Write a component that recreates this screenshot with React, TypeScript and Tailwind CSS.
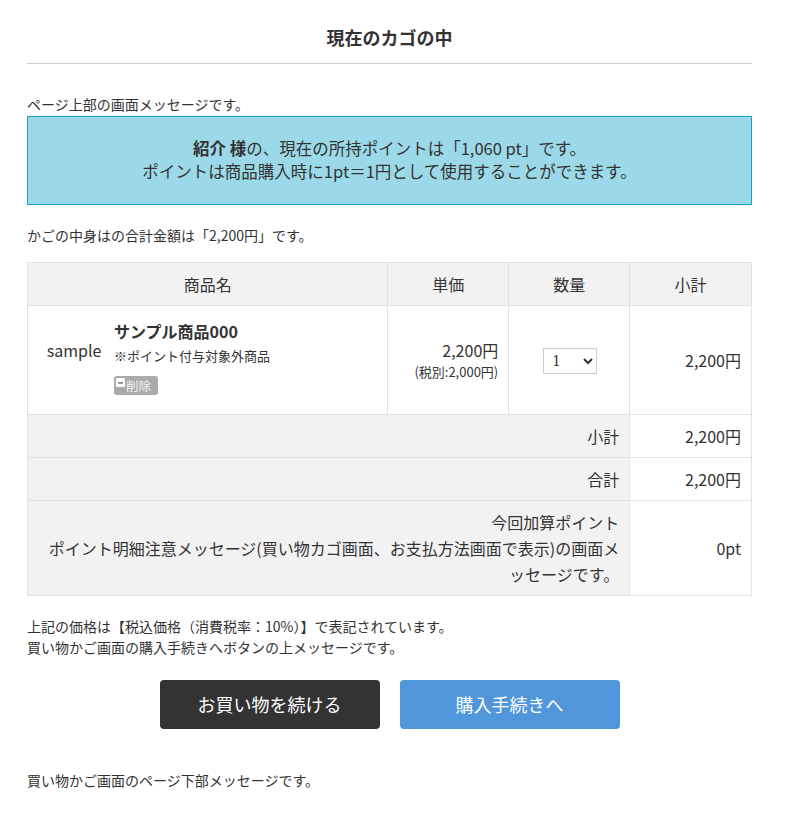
import React from "react";

const font = { fontFamily: '"Noto Sans CJK JP", "Noto Sans", sans-serif' };

export default function App() {
  const cell = "border border-[#e3e3e3] px-[10px] py-[8px]";
  return (
    <div className="w-[787px] bg-white text-[#333]" style={font}>
      <div className="ml-[27px] w-[725px] pb-[35px]">
        <div className="border-b border-[#cccccc] pt-[24px] pb-[12px] text-center text-[18px] font-bold leading-[27px]">
          現在のカゴの中
        </div>

        <p className="mt-[30px] text-[14px] leading-[21px]">ページ上部の画面メッセージです。</p>

        <div className="mt-[1px] border border-[#1aa3c9] bg-[#9bd9e8] pt-[20px] pb-[21px] text-center text-[16.5px] leading-[23px]">
          <div>
            <span className="font-bold">紹介 様</span>の、現在の所持ポイントは「1,060 pt」です。
          </div>
          <div>ポイントは商品購入時に1pt＝1円として使用することができます。</div>
        </div>

        <p className="mt-[20px] text-[14px] leading-[21px]">かごの中身はの合計金額は「2,200円」です。</p>

        <table className="mt-[16px] w-full border-collapse text-[16px] leading-[26px]">
          <colgroup>
            <col className="w-[361px]" />
            <col className="w-[121px]" />
            <col className="w-[121px]" />
            <col className="w-[122px]" />
          </colgroup>
          <thead>
            <tr className="bg-[#f2f2f2]">
              <th className={`${cell} font-normal`}>商品名</th>
              <th className={`${cell} font-normal`}>単価</th>
              <th className={`${cell} font-normal`}>数量</th>
              <th className={`${cell} font-normal`}>小計</th>
            </tr>
          </thead>
          <tbody>
            <tr className="h-[109px]">
              <td className={`${cell} align-middle`}>
                <div className="flex items-center gap-[4px]">
                  <div className="mb-[20px] w-[72px] text-center">sample</div>
                  <div className="mb-[6px] flex flex-col items-start">
                    <div className="font-bold leading-[24px]">サンプル商品000</div>
                    <div className="mt-[3px] text-[13px] leading-[20px]">※ポイント付与対象外商品</div>
                    <div className="mt-[10px] flex h-[19px] w-[44px] items-start gap-[1px] rounded-[3px] bg-[#aaaaaa] pl-[2px] pt-[1px] text-[12.5px] leading-[19px] text-[#f4f4f4]">
                      <span className="mt-[1px] flex h-[9px] w-[9px] shrink-0 items-center justify-center rounded-[1px] bg-white">
                        <span className="h-[2px] w-[5px] bg-[#999999]" />
                      </span>
                      <span className="-mt-[1px]">削除</span>
                    </div>
                  </div>
                </div>
              </td>
              <td className={`${cell} text-right align-middle`}>
                <div className="leading-[24px]">2,200円</div>
                <div className="text-[13px] leading-[20px]">(税別:2,000円)</div>
              </td>
              <td className={`${cell} text-center align-middle`}>
                <select
                  defaultValue="1"
                  className="ml-[2px] h-[26px] w-[54px] border border-[#cccccc] bg-white pl-[4px] text-[16px] text-[#333]"
                  style={{ fontFamily: '"Liberation Serif", serif' }}
                >
                  <option value="1">1</option>
                  <option value="2">2</option>
                  <option value="3">3</option>
                </select>
              </td>
              <td className={`${cell} text-right align-middle`}>2,200円</td>
            </tr>
            <tr>
              <td colSpan={3} className={`${cell} bg-[#f2f2f2] text-right`}>小計</td>
              <td className={`${cell} text-right`}>2,200円</td>
            </tr>
            <tr>
              <td colSpan={3} className={`${cell} bg-[#f2f2f2] text-right`}>合計</td>
              <td className={`${cell} text-right`}>2,200円</td>
            </tr>
            <tr>
              <td colSpan={3} className={`${cell} bg-[#f2f2f2] text-right leading-[26px]`}>
                今回加算ポイント
                <br />
                ポイント明細注意メッセージ(買い物カゴ画面、お支払方法画面で表示)の画面メッセージです。
              </td>
              <td className={`${cell} text-right align-middle`}>0pt</td>
            </tr>
          </tbody>
        </table>

        <div className="mt-[20px] text-[14px] leading-[21px]">
          <p>上記の価格は【税込価格（消費税率：10%）】で表記されています。</p>
          <p>買い物かご画面の購入手続きへボタンの上メッセージです。</p>
        </div>

        <div className="mt-[22px] flex justify-center gap-[20px]">
          <button className="h-[49px] w-[220px] rounded-[4px] bg-[#333333] text-[18px] text-white">
            お買い物を続ける
          </button>
          <button className="h-[49px] w-[220px] rounded-[4px] bg-[#5196db] text-[18px] text-white">
            購入手続きへ
          </button>
        </div>

        <p className="mt-[41px] text-[14px] leading-[21px]">買い物かご画面のページ下部メッセージです。</p>
      </div>
    </div>
  );
}
